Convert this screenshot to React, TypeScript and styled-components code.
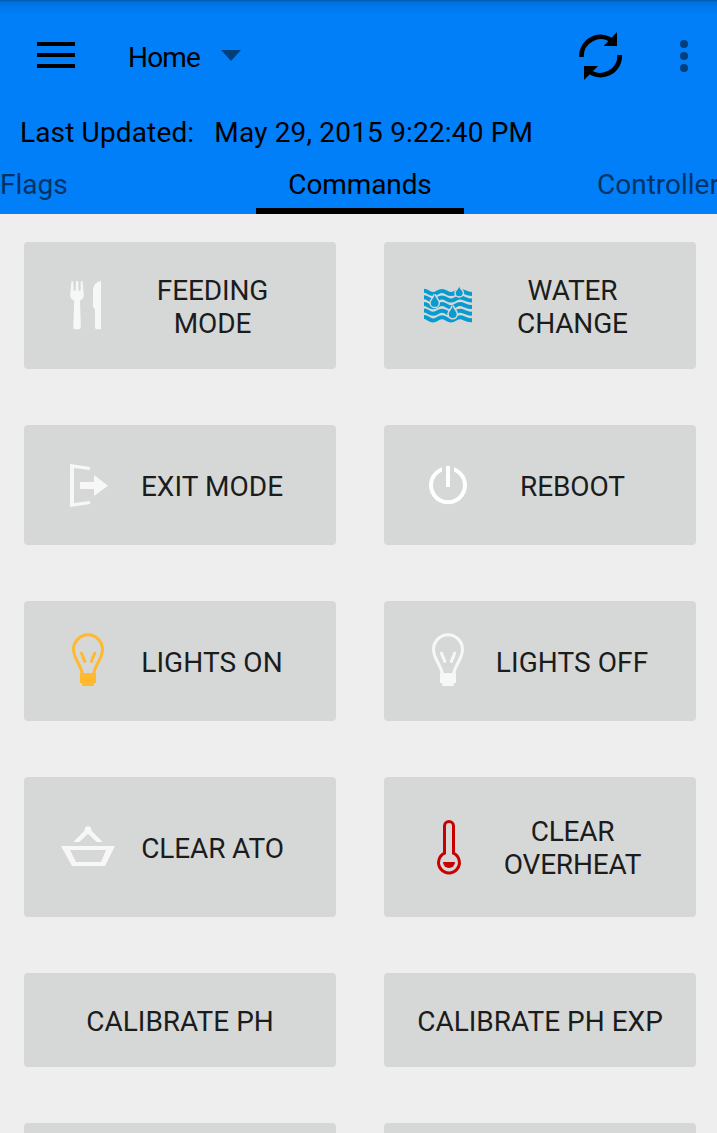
import React from "react";
import styled, { createGlobalStyle } from "styled-components";

const GlobalStyle = createGlobalStyle`
  * { box-sizing: border-box; }
  html, body { margin: 0; height: 100%; overflow: hidden; background: #eee; }
  #root { height: 100%; }
`;

const Screen = styled.div`
  height: 100%;
  display: flex;
  flex-direction: column;
  overflow: hidden;
  font-family: Roboto, sans-serif;
  font-size: 28px;
  line-height: 33px;
  color: #000;
`;

const Header = styled.header`
  flex: none;
  height: 214px;
  display: flex;
  flex-direction: column;
  background: linear-gradient(#0059af 0, #0070dc 2px, #0078ec 7px, #007ff8 15px);
`;

const Toolbar = styled.div`
  height: 112px;
  display: flex;
  align-items: center;
  padding: 0 26px 0 37px;
`;

const PlainButton = styled.button`
  display: flex;
  align-items: center;
  padding: 0;
  border: 0;
  background: none;
  font: inherit;
  color: inherit;
`;

const PageSpinner = styled(PlainButton)`
  gap: 21px;
  margin: 3px auto 0 53px;
  svg { margin-top: -4px; }
`;

const Text = styled.span<{ $spacing?: number }>`
  letter-spacing: ${(p) => p.$spacing ?? 0}px;
  white-space: nowrap;
`;

const MenuButton = styled(PlainButton)`
  margin-top: -2px;
`;

const ToolbarActions = styled.div`
  display: flex;
  align-items: center;
  gap: 53px;
`;

const UpdatedRow = styled.div`
  height: 52px;
  display: flex;
  gap: 20px;
  padding: 4px 20px 0;
`;

const Tabs = styled.nav`
  height: 50px;
  display: grid;
  grid-template-columns: 256px 208px 253px;
`;

const Tab = styled.a<{ $active?: boolean; $align: string }>`
  display: flex;
  justify-content: ${(p) => p.$align};
  padding-top: 4px;
  overflow: hidden;
  opacity: ${(p) => (p.$active ? 1 : 0.6)};
  border-bottom: 6px solid ${(p) => (p.$active ? "#000" : "transparent")};
`;

const LastTab = styled(Tab)`
  padding-left: 133px;
`;

const CommandGrid = styled.main`
  display: grid;
  grid-template-columns: 312px 312px;
  grid-template-rows: 127px 120px 120px 140px 94px 94px;
  gap: 56px 48px;
  padding: 28px 21px 0 24px;
`;

const CommandButton = styled.button<{ $plain?: boolean }>`
  display: flex;
  align-items: center;
  padding: ${(p) => (p.$plain ? "2px 0 0" : "0 36px 0 32px")};
  border: 0;
  border-radius: 4px;
  background: #d6d8d7;
  color: #1b1c1c;
  font: inherit;
`;

const CommandIcon = styled.svg`
  flex: none;
  width: 64px;
  height: 64px;
  margin-right: 4px;
`;

const CommandLabel = styled.span<{ $spacing: number; $drop: number }>`
  flex: 1;
  text-align: center;
  white-space: pre;
  padding-top: ${(p) => p.$drop}px;
  padding-left: ${(p) => (p.$spacing < 0 ? 1 : 0)}px;
  letter-spacing: ${(p) => p.$spacing}px;
`;

const PALE = "#f7f7f7";

const Icon = ({ children }: { children: React.ReactNode }) => (
  <CommandIcon viewBox="0 0 64 64">{children}</CommandIcon>
);

const Cutlery = () => (
  <Icon>
    <g fill={PALE} transform="translate(0 -.8)">
      <path d="M15.500 8h1.700l.4 9.500h2L20 8h2.200l.4 9.500h2L24.800 8h1.700l1.300 14c0 3-1.600 4.200-3.800 5.200L24.800 54q0 2-2 2h-3.500q-2 0-2-2L18.200 27.200c-2.200-1-4-2.200-4-5.200z" />
      <path d="M45 7.700V56h-4q-2 0-2-2V36q-2-1.400-2-3V17q.5-8 8-9.300z" />
    </g>
  </Icon>
);

const wave = (y: number) =>
  `M8 ${y}C12 ${y} 13 ${y + 3.3} 17 ${y + 3.3}S22 ${y + 0.2} 26 ${y + 0.2} 31 ${y + 3.3} 35 ${y + 3.3} 40 ${y + 0.2} 44 ${y + 0.2} 50 ${y + 3.2} 56 ${y + 3.2}`;

const drop = (x: number, y: number, r: number, h: number) =>
  `M${x} ${y}C${x - 0.6} ${y + h * 0.3} ${x - r} ${y + h * 0.45} ${x - r} ${y + h - r}a${r} ${r} 0 0 0 ${r * 2} 0C${x + r} ${y + h * 0.45} ${x + 0.6} ${y + h * 0.3} ${x} ${y}z`;

const Water = () => (
  <Icon>
    <g transform="translate(0 -.8)">
      <g fill="none" stroke="#089bd0" strokeWidth="4">
        {[17.5, 24.1, 30.7, 37.3, 43.9].map((y) => (
          <path key={y} d={wave(y)} />
        ))}
      </g>
      <g fill="#089bd0" stroke="#d6d8d7" strokeWidth="3" paintOrder="stroke">
        <path d={drop(18.7, 21.3, 3.9, 12.3)} />
        <path d={drop(43.2, 13.3, 3.5, 9.8)} />
        <path d={drop(36.7, 32.5, 3.9, 12.3)} />
      </g>
    </g>
  </Icon>
);

const Exit = () => (
  <Icon>
    <path fill={PALE} d="M14 11l20 3v3l-16-2v35l16-2v3l-20 3zM24 29h14v-7l14 10.700L38 43v-7H24z" />
  </Icon>
);

const Power = () => (
  <Icon>
    <path fill="#fff" d="M26 14.300a19 19 0 1 0 12 0v4.250a15 15 0 1 1-12 0zM30 13h4v21h-4z" />
  </Icon>
);

const Bulb = ({ color }: { color: string }) => (
  <Icon>
    <path
      fill="none"
      stroke={color}
      strokeWidth="3"
      d="M26.200 45c-.2-8-8.700-15-8.700-24.500a14.500 14.700 0 0 1 29 0C46.500 30 38 37 37.800 45"
    />
    <path fill={color} d="M24 44h16v10h-2v1.500q0 1.500-1.500 1.500h-9q-1.500 0-1.500-1.500V54h-2z" />
    <path stroke={color} strokeWidth="3" strokeLinecap="round" d="M25.500 24.200l3.300 8.200M38.700 24.200l-3.300 8.200" />
  </Icon>
);

const Basket = () => (
  <Icon>
    <path fill={PALE} fillRule="evenodd" d="M5 31h54L49 51H16zM14 35l6 12h25l5-12z" />
    <path fill={PALE} d="M17.300 27l11.400-11.500a3.400 3.400 0 1 1 6.600 0L46.700 27h-6L32 18.800 23.300 27z" />
  </Icon>
);

const Thermometer = () => (
  <Icon>
    <path
      fill="none"
      stroke="#c90000"
      strokeWidth="3"
      d="M28.500 38.200V11a4.500 4.500 0 0 1 9 0v27.200a10.400 10.400 0 1 1-9 0z"
    />
    <path fill="#c90000" d="M27 47h12a6 6 0 0 1-12 0z" />
  </Icon>
);

type Command = { label: string; icon?: React.ReactNode; spacing: number; drop?: number };

const commands: Command[] = [
  { label: "FEEDING\nMODE", icon: <Cutlery />, spacing: -0.15 },
  { label: "WATER\nCHANGE", icon: <Water />, spacing: -0.15 },
  { label: "EXIT MODE", icon: <Exit />, spacing: 0.05 },
  { label: "REBOOT", icon: <Power />, spacing: -0.1 },
  { label: "LIGHTS ON", icon: <Bulb color="#ffb92f" />, spacing: 0.1 },
  { label: "LIGHTS OFF", icon: <Bulb color={PALE} />, spacing: 0.08 },
  { label: "CLEAR ATO", icon: <Basket />, spacing: -0.12 },
  { label: "CLEAR\nOVERHEAT", icon: <Thermometer />, spacing: -0.2 },
  { label: "CALIBRATE PH", spacing: 0, drop: 0 },
  { label: "CALIBRATE PH EXP", spacing: 0, drop: 0 },
  { label: "", spacing: 0 },
  { label: "", spacing: 0 },
];

export default function App() {
  return (
    <>
      <GlobalStyle />
      <Screen>
        <Header>
          <Toolbar>
            <MenuButton aria-label="Menu">
              <svg width="38" height="26">
                <path d="M0 0h38v4H0zM0 11h38v4H0zM0 22h38v4H0z" />
              </svg>
            </MenuButton>
            <PageSpinner>
              <Text $spacing={-0.8}>Home</Text>
              <svg width="20" height="11">
                <path fill="#003f7c" d="M0 0h20L10 11z" />
              </svg>
            </PageSpinner>
            <ToolbarActions>
              <PlainButton aria-label="Refresh">
                <svg width="48" height="48" viewBox="0 0 48 48">
                  <g fill="none" stroke="#000" strokeWidth="4.700">
                    <path d="M5.500 25a19.200 19.200 0 0 1 31-16" />
                    <path d="M43.700 23a19.200 19.200 0 0 1-31 16" />
                  </g>
                  <path d="M41 0v14H27.700zM8 34h14L8 48z" />
                </svg>
              </PlainButton>
              <PlainButton aria-label="More">
                <svg width="14" height="34" viewBox="0 0 14 34" fill="#003f7c">
                  <circle cx="7" cy="5" r="4" />
                  <circle cx="7" cy="17" r="4" />
                  <circle cx="7" cy="29" r="4" />
                </svg>
              </PlainButton>
            </ToolbarActions>
          </Toolbar>
          <UpdatedRow>
            <Text $spacing={0.15}>Last Updated:</Text>
            <Text $spacing={0.18}>May 29, 2015 9:22:40 PM</Text>
          </UpdatedRow>
          <Tabs>
            <Tab $align="flex-start">
              <Text>Flags</Text>
            </Tab>
            <Tab $active $align="center">
              <Text $spacing={-0.1}>Commands</Text>
            </Tab>
            <LastTab $align="flex-start">
              <Text>Controller</Text>
            </LastTab>
          </Tabs>
        </Header>
        <CommandGrid>
          {commands.map((c, i) => (
            <CommandButton key={i} $plain={!c.icon}>
              {c.icon}
              <CommandLabel $spacing={c.spacing} $drop={c.drop ?? 2}>
                {c.label}
              </CommandLabel>
            </CommandButton>
          ))}
        </CommandGrid>
      </Screen>
    </>
  );
}
